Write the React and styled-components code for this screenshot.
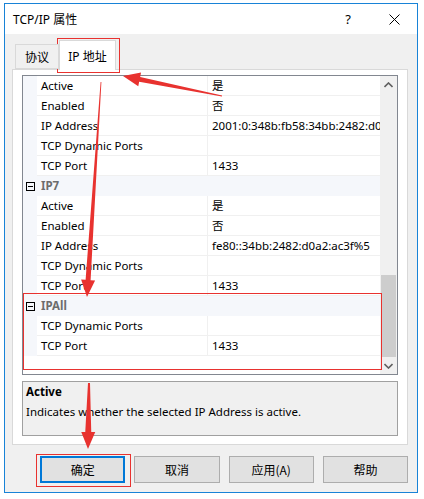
import styled, { createGlobalStyle } from 'styled-components'

const GlobalStyle = createGlobalStyle`
  html, body {
    margin: 0;
    padding: 0;
    background: #ffffff;
  }
  body {
    font-family: "Noto Sans", "Noto Sans CJK SC", sans-serif;
    font-size: 12px;
    color: #000;
  }
`

const Page = styled.div`
  position: relative;
  width: 424px;
  height: 499px;
  padding: 3px 0 0 4px;
  box-sizing: border-box;
`

// Selve dialogvinduet med blå ramme
const Window = styled.div`
  width: 414px;
  height: 490px;
  box-sizing: border-box;
  border: 1px solid #1883d7;
  background: #f0f0f0;
  display: flex;
  flex-direction: column;
`

const TitleBar = styled.div`
  height: 30px;
  background: #ffffff;
  display: flex;
  align-items: center;
  padding-left: 8px;
  font-size: 12px;
`

const Title = styled.span`
  flex: 1;
`

const TitleButton = styled.span`
  width: 46px;
  display: flex;
  justify-content: center;
  align-items: center;
  font-size: 13px;
`

const Body = styled.div`
  flex: 1;
  padding: 6px 9px 0 7px;
  display: flex;
  flex-direction: column;
`

const TabStrip = styled.div`
  display: flex;
  align-items: flex-end;
  height: 29px;
  padding-left: 3px;
  position: relative;
  z-index: 1;
`

const Tab = styled.div`
  box-sizing: border-box;
  height: ${({ $active }) => ($active ? '30px' : '25px')};
  margin-bottom: ${({ $active }) => ($active ? '-1px' : '0')};
  display: flex;
  align-items: center;
  justify-content: center;
  white-space: nowrap;
  border: 1px solid #d9d9d9;
  border-bottom: ${({ $active }) => ($active ? 'none' : '1px solid #d9d9d9')};
  background: ${({ $active }) => ($active ? '#ffffff' : '#f0f0f0')};
  width: ${({ $w }) => $w}px;
  font-size: 12px;
`

const Panel = styled.div`
  box-sizing: border-box;
  height: 376px;
  background: #ffffff;
  border: 1px solid #d9d9d9;
  padding: 5px 9px 0 9px;
  display: flex;
  flex-direction: column;
`

const Grid = styled.div`
  box-sizing: border-box;
  height: 300px;
  border: 1px solid #828790;
  display: flex;
  font-size: 11.5px;
`

const GridBody = styled.div`
  flex: 1;
  overflow: hidden;
  background: #ffffff;
`

const Row = styled.div`
  display: grid;
  grid-template-columns: 14px 171px 1fr;
  height: 20px;
`

const Margin = styled.div`
  background: #f5f7fb;
  display: flex;
  align-items: center;
  justify-content: center;
`

const Cell = styled.div`
  box-sizing: border-box;
  padding-left: 4px;
  line-height: 19px;
  white-space: nowrap;
  overflow: hidden;
  border-bottom: 1px solid #f0f0f0;
  border-right: ${({ $name }) => ($name ? '1px solid #f0f0f0' : 'none')};
`

const CategoryCell = styled.div`
  grid-column: 2 / 4;
  background: #f5f7fb;
  padding-left: 4px;
  line-height: 20px;
  font-weight: 700;
  color: #6d6d6d;
`

const MinusBox = styled.span`
  box-sizing: border-box;
  width: 9px;
  height: 9px;
  border: 1px solid #000;
  position: relative;
  margin-left: 1px;
  &::after {
    content: '';
    position: absolute;
    left: 1px;
    right: 1px;
    top: 3px;
    height: 1px;
    background: #000;
  }
`

const ScrollBar = styled.div`
  width: 17px;
  background: #f0f0f0;
  display: flex;
  flex-direction: column;
  align-items: center;
`

const ScrollArrow = styled.div`
  height: 17px;
  display: flex;
  align-items: center;
  justify-content: center;
`

const ScrollTrack = styled.div`
  flex: 1;
  width: 100%;
  display: flex;
  flex-direction: column;
  align-items: center;
  padding-top: 182px;
  box-sizing: border-box;
`

const Thumb = styled.div`
  width: 15px;
  height: 82px;
  background: #cdcdcd;
`

const Description = styled.div`
  box-sizing: border-box;
  margin-top: 6px;
  height: 55px;
  border: 1px solid #a0a0a0;
  background: #f0f0f0;
  padding: 2px 3px;
  font-size: 11.5px;
`

const DescTitle = styled.div`
  font-weight: 700;
  line-height: 16px;
`

const DescText = styled.div`
  margin-top: 4px;
  line-height: 16px;
`

const ButtonRow = styled.div`
  display: flex;
  gap: 9px;
  padding: 11px 0 0 28px;
`

const Button = styled.button`
  box-sizing: border-box;
  width: 86px;
  height: 27px;
  background: #e1e1e1;
  border: ${({ $primary }) => ($primary ? '2px solid #0078d7' : '1px solid #adadad')};
  font-family: "Noto Sans CJK SC", "Noto Sans", sans-serif;
  font-size: 12px;
  color: #000;
  padding: 0;
`

const Overlay = styled.svg`
  position: absolute;
  left: 0;
  top: 0;
  pointer-events: none;
`

const rows = [
  { name: 'Active', value: '是' },
  { name: 'Enabled', value: '否' },
  { name: 'IP Address', value: '2001:0:348b:fb58:34bb:2482:d0a2:ac3f' },
  { name: 'TCP Dynamic Ports', value: '' },
  { name: 'TCP Port', value: '1433' },
  { cat: 'IP7' },
  { name: 'Active', value: '是' },
  { name: 'Enabled', value: '否' },
  { name: 'IP Address', value: 'fe80::34bb:2482:d0a2:ac3f%5' },
  { name: 'TCP Dynamic Ports', value: '' },
  { name: 'TCP Port', value: '1433' },
  { cat: 'IPAll' },
  { name: 'TCP Dynamic Ports', value: '' },
  { name: 'TCP Port', value: '1433' },
]

// Lager en spiss pil som polygon fra hale til spiss
function arrowPoints(tail, tip, headLen, headHalf, s0, s1) {
  const dx = tip[0] - tail[0]
  const dy = tip[1] - tail[1]
  const len = Math.hypot(dx, dy)
  const ux = dx / len
  const uy = dy / len
  const nx = -uy
  const ny = ux
  const bx = tip[0] - ux * headLen
  const by = tip[1] - uy * headLen
  const p = [
    [tail[0] + nx * s0, tail[1] + ny * s0],
    [bx + nx * s1, by + ny * s1],
    [bx + nx * headHalf, by + ny * headHalf],
    tip,
    [bx - nx * headHalf, by - ny * headHalf],
    [bx - nx * s1, by - ny * s1],
    [tail[0] - nx * s0, tail[1] - ny * s0],
  ]
  return p.map((q) => q.join(',')).join(' ')
}

const RED = '#e8322f'

export default function App() {
  return (
    <Page>
      <GlobalStyle />
      <Window>
        <TitleBar>
          <Title>TCP/IP 属性</Title>
          <TitleButton>?</TitleButton>
          <TitleButton>
            <svg width="11" height="11" viewBox="0 0 11 11">
              <path d="M0.5 0.5 L10.5 10.5 M10.5 0.5 L0.5 10.5" stroke="#000" strokeWidth="1" />
            </svg>
          </TitleButton>
        </TitleBar>
        <Body>
          <TabStrip>
            <Tab $w={44}>协议</Tab>
            <Tab $active $w={57}>IP 地址</Tab>
          </TabStrip>
          <Panel>
            <Grid>
              <GridBody>
                {rows.map((r, i) =>
                  r.cat ? (
                    <Row key={i}>
                      <Margin>
                        <MinusBox />
                      </Margin>
                      <CategoryCell>{r.cat}</CategoryCell>
                    </Row>
                  ) : (
                    <Row key={i}>
                      <Margin />
                      <Cell $name>{r.name}</Cell>
                      <Cell>{r.value}</Cell>
                    </Row>
                  )
                )}
              </GridBody>
              <ScrollBar>
                <ScrollArrow>
                  <svg width="9" height="6" viewBox="0 0 9 6">
                    <path d="M0.5 5 L4.5 1 L8.5 5" fill="none" stroke="#606060" strokeWidth="1.6" />
                  </svg>
                </ScrollArrow>
                <ScrollTrack>
                  <Thumb />
                </ScrollTrack>
                <ScrollArrow>
                  <svg width="9" height="6" viewBox="0 0 9 6">
                    <path d="M0.5 1 L4.5 5 L8.5 1" fill="none" stroke="#606060" strokeWidth="1.6" />
                  </svg>
                </ScrollArrow>
              </ScrollBar>
            </Grid>
            <Description>
              <DescTitle>Active</DescTitle>
              <DescText>Indicates whether the selected IP Address is active.</DescText>
            </Description>
          </Panel>
          <ButtonRow>
            <Button $primary>确定</Button>
            <Button>取消</Button>
            <Button>应用(A)</Button>
            <Button>帮助</Button>
          </ButtonRow>
        </Body>
      </Window>

      <Overlay width="424" height="499" viewBox="0 0 424 499">
        <rect x="57.5" y="38.5" width="62" height="34" fill="none" stroke={RED} strokeWidth="1" />
        <rect x="23.5" y="293.5" width="358" height="76" fill="none" stroke={RED} strokeWidth="1" />
        <rect x="36.5" y="454.5" width="94" height="32" fill="none" stroke={RED} strokeWidth="1" />
        <polygon points={arrowPoints([222, 96], [123, 76], 17, 7, 0.5, 2.5)} fill={RED} />
        <polygon points={arrowPoints([101, 82], [87, 297], 17, 7, 0.4, 2.5)} fill={RED} />
        <polygon points={arrowPoints([89, 383], [88, 449], 17, 7, 1, 3)} fill={RED} />
      </Overlay>
    </Page>
  )
}
